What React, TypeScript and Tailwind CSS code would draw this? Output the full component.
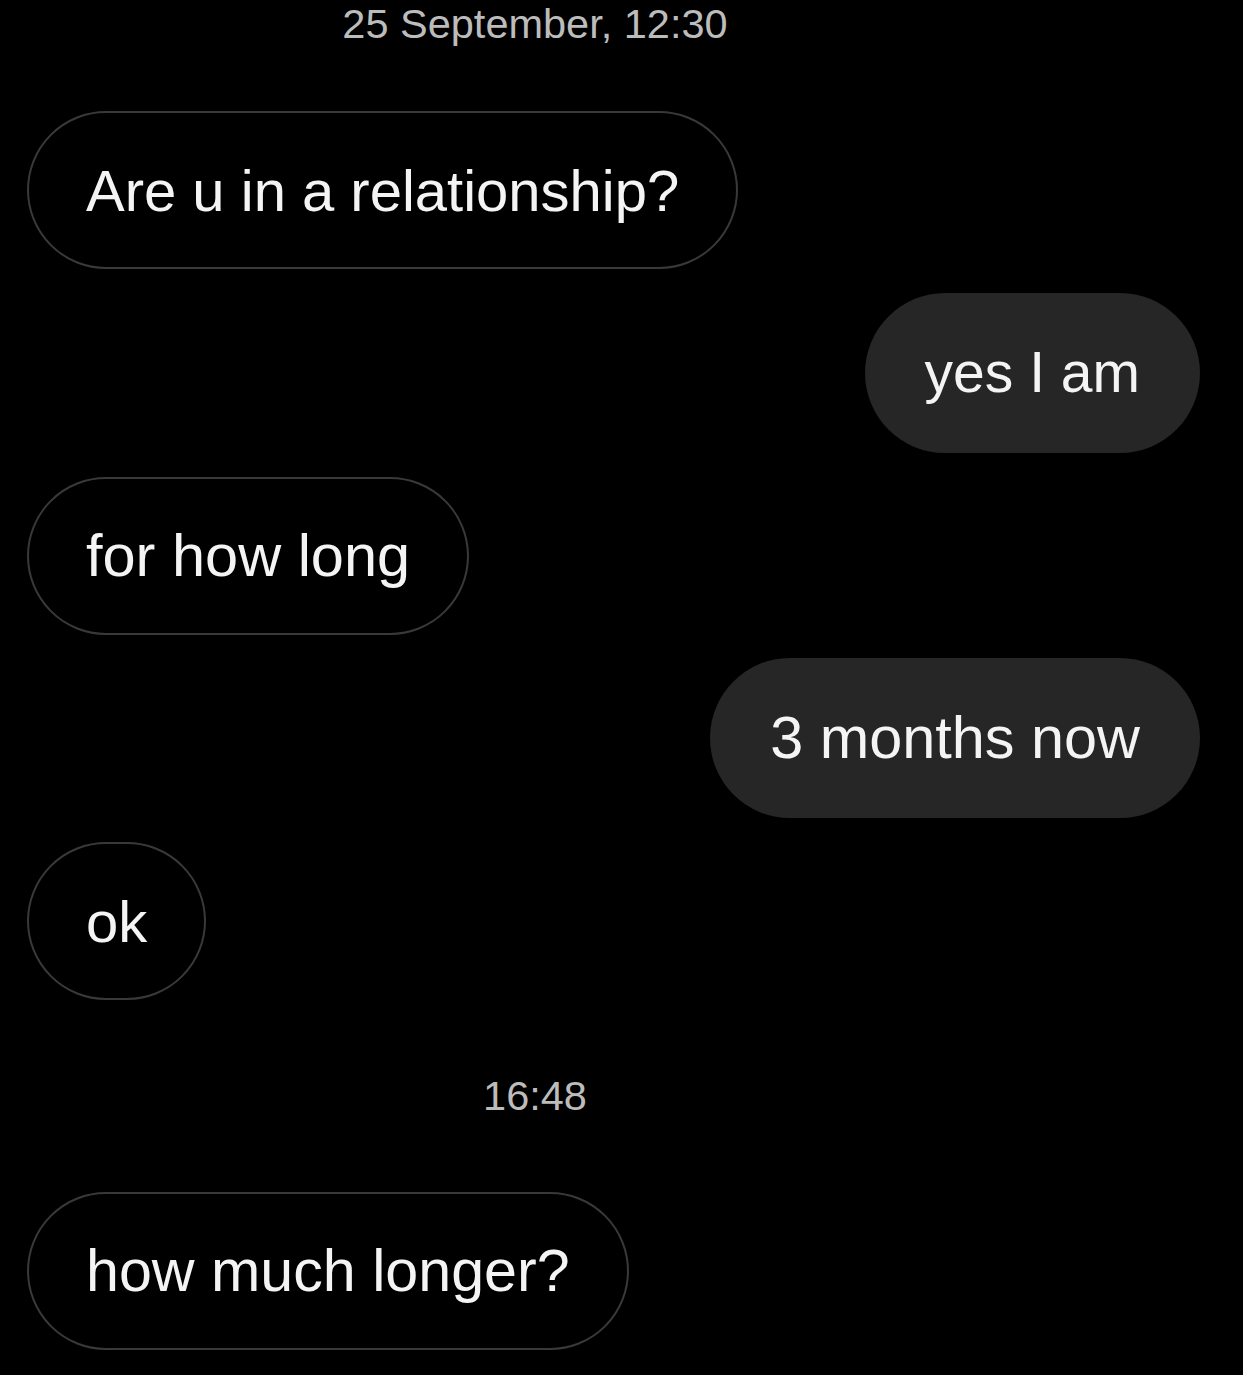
import React from "react";

const font = { fontFamily: '"Liberation Sans", Arial, Helvetica, sans-serif' };

function Received({ text, size, className = "" }: { text: string; size: string; className?: string }) {
  return (
    <div className={`flex justify-start ${className}`}>
      <div className={`flex h-[158px] items-center rounded-full border-2 border-[#393939] bg-black px-[57px] text-[#f4f4f4] ${size}`}>
        {text}
      </div>
    </div>
  );
}

function Sent({ text, size, className = "" }: { text: string; size: string; className?: string }) {
  return (
    <div className={`flex justify-end ${className}`}>
      <div className={`flex h-[160px] items-center rounded-full bg-[#262626] px-[60px] text-[#f4f4f4] ${size}`}>
        {text}
      </div>
    </div>
  );
}

function Stamp({ text, className = "" }: { text: string; className?: string }) {
  return (
    <div className={`flex justify-center pr-[173px] ${className}`}>
      <span className="text-[41.5px] leading-[47px] text-[#bcbcbc]">{text}</span>
    </div>
  );
}

export default function App() {
  return (
    <div className="h-[1375px] w-[1243px] overflow-hidden bg-black" style={font}>
      <Stamp text="25 September, 12:30" />
      <div className="flex flex-col pl-[27px] pr-[43px]">
        <Received text="Are u in a relationship?" size="text-[58px]" className="mt-[64px]" />
        <Sent text="yes I am" size="text-[57px]" className="mt-[24px]" />
        <Received text="for how long" size="text-[59.5px]" className="mt-[24px]" />
        <Sent text="3 months now" size="text-[59.4px]" className="mt-[23px]" />
        <Received text="ok" size="text-[58px]" className="mt-[24px]" />
      </div>
      <Stamp text="16:48" className="mt-[72px]" />
      <div className="flex flex-col pl-[27px] pr-[43px]">
        <Received text="how much longer?" size="text-[59.2px]" className="mt-[73px]" />
      </div>
    </div>
  );
}
